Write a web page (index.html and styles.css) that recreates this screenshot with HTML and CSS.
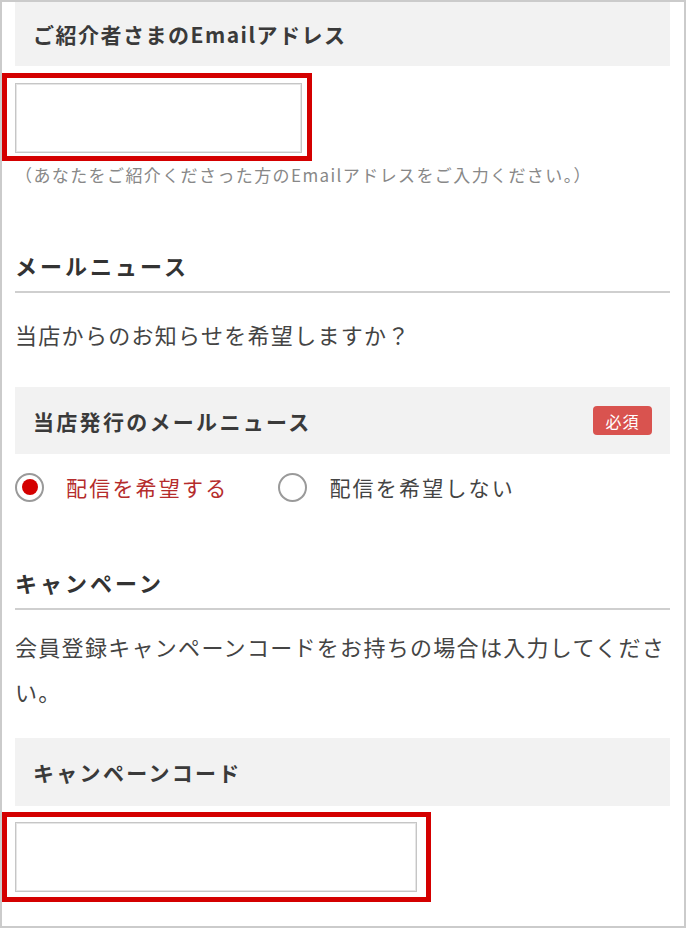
FILE: index.html
```html
<!DOCTYPE html>
<html lang="ja">
<head>
<meta charset="utf-8">
<title>会員登録</title>
<link rel="stylesheet" href="styles.css">
</head>
<body>
<div class="frame">
  <div class="form">
    <div class="field-head field-head--top">ご紹介者さまのEmailアドレス</div>
    <div class="mark mark--first"><input class="text-input text-input--email" type="text"></div>
    <p class="note">（あなたをご紹介くださった方のEmailアドレスをご入力ください。）</p>

    <h2 class="sec-title sec-title--news">メールニュース</h2>
    <p class="lead lead--news">当店からのお知らせを希望しますか？</p>

    <div class="field-head field-head--news">
      <span>当店発行のメールニュース</span>
      <span class="badge">必須</span>
    </div>
    <div class="radios">
      <label class="radio radio--on"><span class="radio-dot"></span><span class="radio-label">配信を希望する</span></label>
      <label class="radio"><span class="radio-dot"></span><span class="radio-label">配信を希望しない</span></label>
    </div>

    <h2 class="sec-title sec-title--campaign">キャンペーン</h2>
    <p class="lead lead--campaign">会員登録キャンペーンコードをお持ちの場合は入力してください。</p>

    <div class="field-head field-head--code">キャンペーンコード</div>
    <div class="mark mark--second"><input class="text-input text-input--code" type="text"></div>
  </div>
</div>
</body>
</html>
```

FILE: styles.css
```css
* { box-sizing: border-box; }
html, body { margin: 0; padding: 0; background: #fff; }
body {
  font-family: "Noto Sans CJK JP", "Noto Sans", sans-serif;
  color: #444;
}
.frame {
  width: 686px;
  height: 928px;
  border: 2px solid #cbcbcb;
  overflow: hidden;
}
.form {
  padding: 0 14px 0 13px;
}
.field-head {
  background: #f2f2f2;
  display: flex;
  align-items: center;
  justify-content: space-between;
  padding: 0 18px;
  font-size: 21px;
  font-weight: bold;
  color: #3a3a3a;
  letter-spacing: 1.5px;
}
.field-head--top { height: 64px; }
.field-head--news { height: 67px; margin-top: 30px; letter-spacing: 2.3px; }
.field-head--code { height: 68px; margin-top: 24px; letter-spacing: 2.3px; }
.badge {
  background: #d9534f;
  color: #fff;
  font-size: 16px;
  font-weight: normal;
  letter-spacing: 1px;
  width: 59px;
  height: 29px;
  border-radius: 4px;
  display: flex;
  align-items: center;
  justify-content: center;
}
.mark {
  display: inline-block;
  vertical-align: top;
  border: 5px solid #d40000;
  margin-left: -13px;
  padding: 5px 5px 3px 8px;
}
.mark--first { margin-top: 7px; }
.mark--second { margin-top: 6px; padding: 5px 9px 5px 8px; }
.mark > .text-input { display: block; }
.text-input {
  appearance: none;
  -webkit-appearance: none;
  height: 70px;
  border: 1px solid #c6c6c6;
  box-shadow: inset 0 0 0 1px #e6e6e6;
  background: #fff;
  margin: 0;
  padding: 0 10px;
  font: inherit;
  outline: none;
}
.text-input--email { width: 287px; }
.text-input--code { width: 402px; }
.note {
  margin: 0;
  font-size: 17px;
  line-height: 28px;
  color: #888;
  letter-spacing: 1.4px;
}
.sec-title {
  margin: 0;
  font-size: 22px;
  line-height: 32px;
  font-weight: bold;
  color: #333;
  letter-spacing: 3px;
  padding-bottom: 10px;
  border-bottom: 2px solid #cfcfcf;
}
.sec-title--news { margin-top: 60px; }
.sec-title--campaign { margin-top: 57px; }
.lead {
  margin: 0;
  font-size: 22px;
  line-height: 45px;
  color: #444;
  letter-spacing: 1.3px;
}
.lead--news { margin-top: 19px; }
.lead--campaign { margin-top: 14px; }
.radios {
  display: flex;
  align-items: center;
  height: 44px;
  margin-top: 11px;
}
.radio {
  display: flex;
  align-items: center;
  gap: 22px;
  font-size: 21px;
  letter-spacing: 2.2px;
  color: #444;
}
.radio + .radio { margin-left: 50px; }
.radio--on { color: #b52c2c; }
.radio-dot {
  width: 29px;
  height: 29px;
  border-radius: 50%;
  border: 2px solid #9a9a9a;
  background: #fff;
  display: flex;
  align-items: center;
  justify-content: center;
  flex: none;
}
.radio--on .radio-dot::after {
  content: "";
  width: 16px;
  height: 16px;
  border-radius: 50%;
  background: #d40000;
}
```
